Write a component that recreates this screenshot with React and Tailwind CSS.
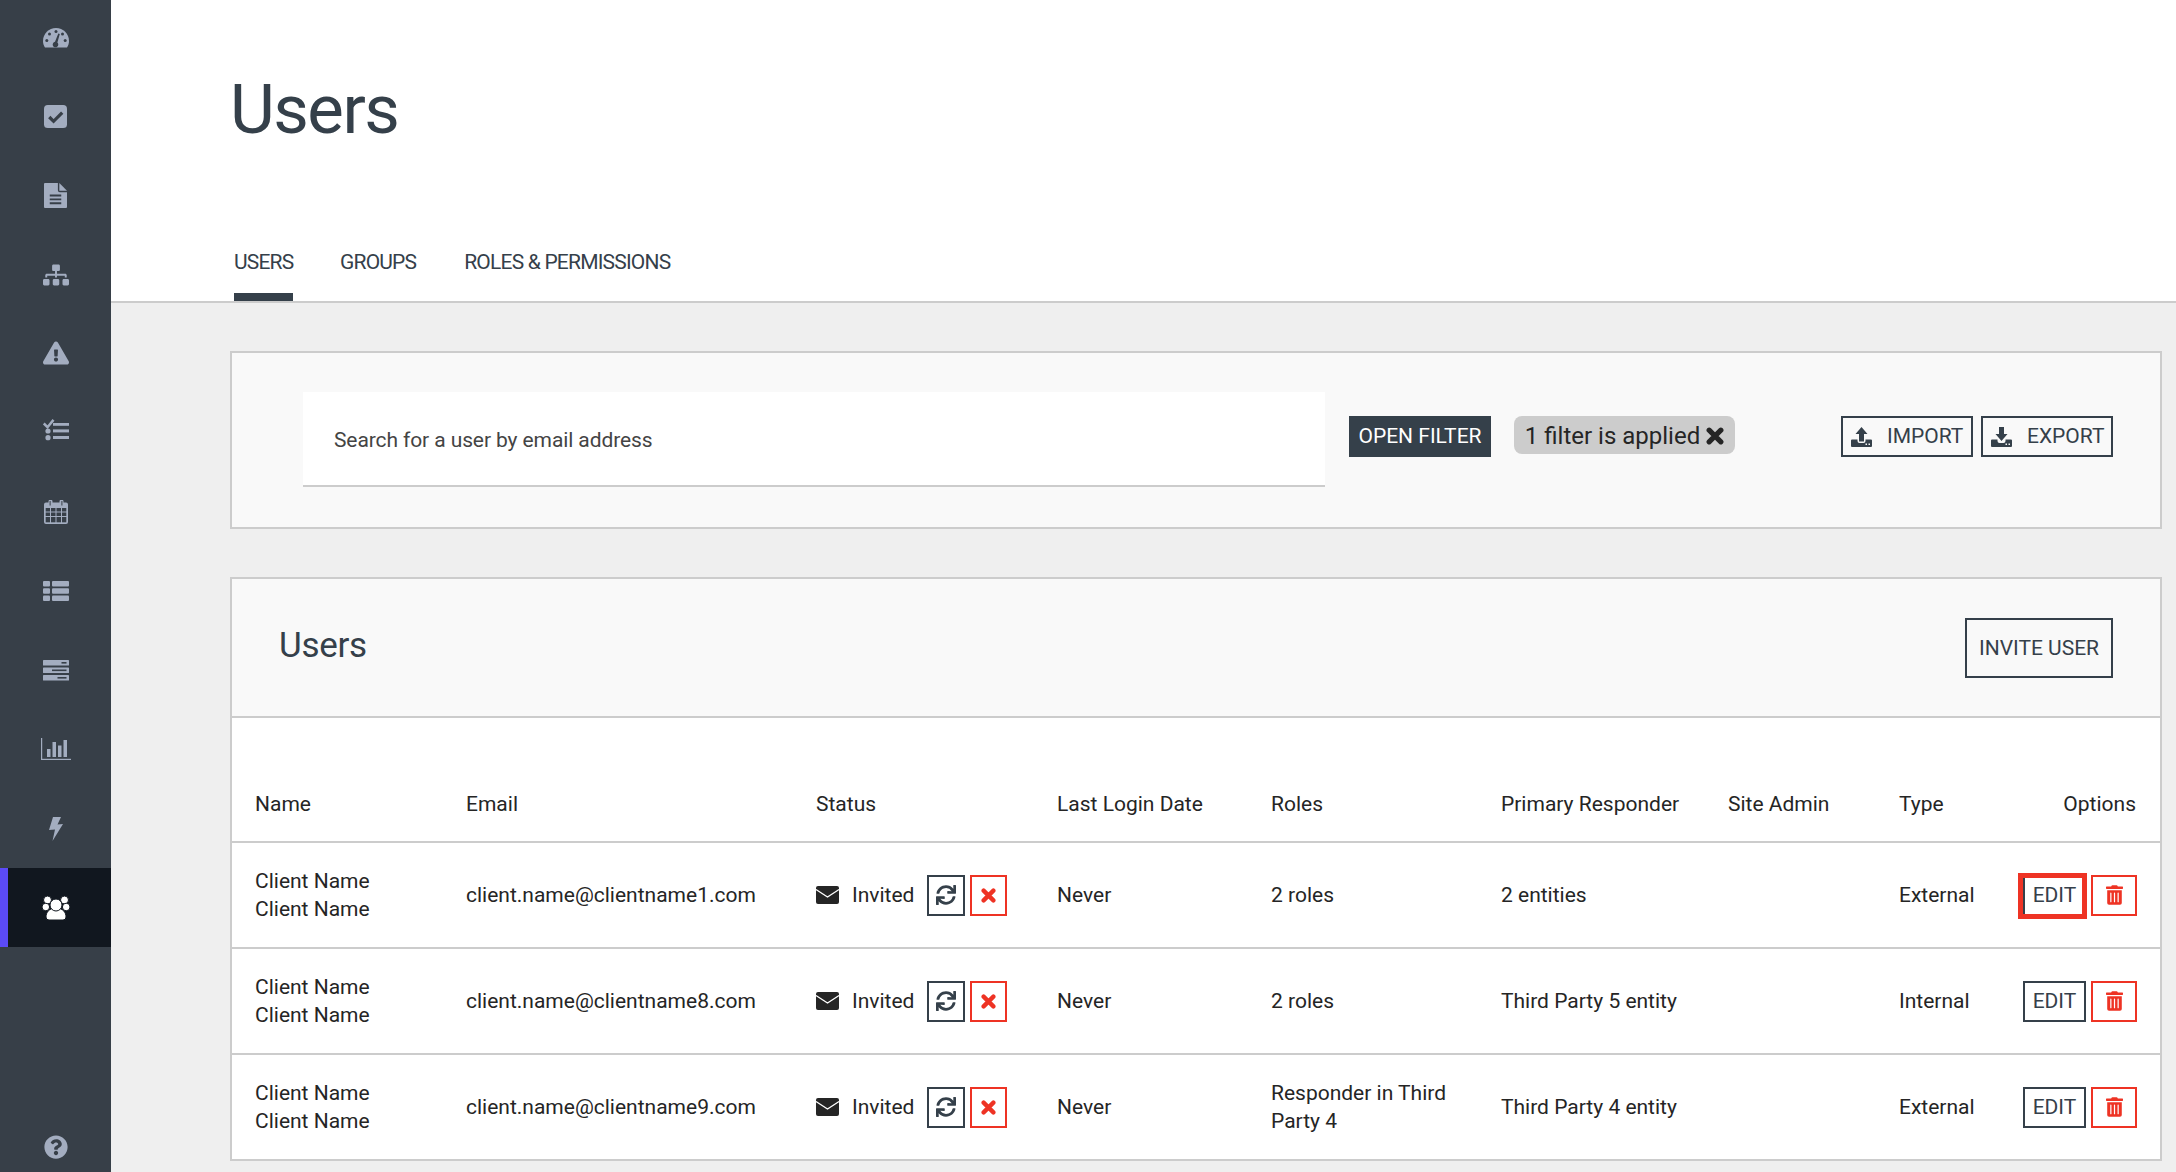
import React from "react";
import { FaSitemap, FaExclamationTriangle, FaQuestionCircle, FaSync, FaTrashAlt } from "react-icons/fa";

const Gauge = () => (
  <svg viewBox="0 0 26 22" className="w-[26px] h-[22px]">
    <path fill="currentColor" d="M2 20.5C.7 18.6 0 16.4 0 14 0 6.8 5.8 1 13 1s13 5.8 13 13c0 2.4-.7 4.6-2 6.500z" />
    <g fill="#373f48">
      <circle cx="13" cy="4.500" r="1.500" /><circle cx="6.500" cy="7" r="1.500" /><circle cx="19.500" cy="7" r="1.500" />
      <circle cx="3.800" cy="13.500" r="1.500" /><circle cx="22.200" cy="13.500" r="1.500" />
      <path d="M15.300 6.500l1.500.5-2.400 8.500a2.800 2.800 0 1 1-2.400-.7z" />
    </g>
  </svg>
);
const CheckBox = () => (
  <svg viewBox="0 0 24 24" className="w-[23px] h-[23px]">
    <rect width="24" height="24" rx="4" fill="currentColor" />
    <path d="M5.500 12.500l4.500 4.500 9-9" fill="none" stroke="#373f48" strokeWidth="3.400" />
  </svg>
);
const FileDoc = () => (
  <svg viewBox="0 0 24 26" className="w-[23px] h-[25px]">
    <path fill="currentColor" d="M1 0h13.500v7.500a2 2 0 0 0 2 2H24V25a1 1 0 0 1-1 1H1a1 1 0 0 1-1-1V1a1 1 0 0 1 1-1z" />
    <path fill="currentColor" d="M16 0l8 8h-8z" />
    <path stroke="#373f48" strokeWidth="2" d="M6 13h12M6 17h12M6 21h12" />
  </svg>
);
const Tasks = () => (
  <svg viewBox="0 0 26 22" className="w-[26px] h-[22px]">
    <path d="M.8 4.500l3.700 3.700L10.500.9" fill="none" stroke="currentColor" strokeWidth="2.500" />
    <g fill="currentColor">
      <rect x="10" y="4" width="16" height="2.800" />
      <circle cx="5" cy="12" r="2.600" /><rect x="10" y="10.400" width="16" height="3" />
      <circle cx="5" cy="18.700" r="2.600" /><rect x="10" y="17" width="16" height="3" />
    </g>
  </svg>
);
const Calendar = () => (
  <svg viewBox="0 0 24 24" className="w-[24px] h-[24px]">
    <path fill="currentColor" d="M2 2.500h2.500V1.500a2 2 0 0 1 4 0v1h7v-1a2 2 0 0 1 4 0v1H22a2 2 0 0 1 2 2V22a2 2 0 0 1-2 2H2a2 2 0 0 1-2-2V4.500a2 2 0 0 1 2-2z" />
    <g fill="#373f48">
      <rect x="5.600" y="1" width="1" height="4.500" /><rect x="17.400" y="1" width="1" height="4.500" />
      <rect x="1.700" y="8" width="4.300" height="3.500" /><rect x="7" y="8" width="4.500" height="3.500" /><rect x="12.500" y="8" width="4.500" height="3.500" /><rect x="18" y="8" width="4.300" height="3.500" />
      <rect x="1.700" y="12.500" width="4.300" height="3.500" /><rect x="7" y="12.500" width="4.500" height="3.500" /><rect x="12.500" y="12.500" width="4.500" height="3.500" /><rect x="18" y="12.500" width="4.300" height="3.500" />
      <rect x="1.700" y="17" width="4.300" height="5.300" /><rect x="7" y="17" width="4.500" height="5.300" /><rect x="12.500" y="17" width="4.500" height="5.300" /><rect x="18" y="17" width="4.300" height="5.300" />
    </g>
  </svg>
);
const ThList = () => (
  <svg viewBox="0 0 26 20" className="w-[26px] h-[20px]">
    <g fill="currentColor">
      <rect y="0" width="7" height="5.500" rx="1" /><rect x="9" y="0" width="17" height="5.500" rx="1" />
      <rect y="7.200" width="7" height="5.500" rx="1" /><rect x="9" y="7.200" width="17" height="5.500" rx="1" />
      <rect y="14.500" width="7" height="5.500" rx="1" /><rect x="9" y="14.500" width="17" height="5.500" rx="1" />
    </g>
  </svg>
);
const Server = () => (
  <svg viewBox="0 0 26 21" className="w-[26px] h-[21px]">
    <g fill="currentColor">
      <rect y="0" width="26" height="5.500" rx=".6" /><rect y="7.500" width="26" height="5.500" rx=".6" /><rect y="15" width="26" height="5.500" rx=".6" />
    </g>
    <g fill="#373f48">
      <rect x="18.500" y="2" width="5" height="1.600" /><rect x="9" y="9.500" width="14.500" height="1.600" /><rect x="14.500" y="17" width="9" height="1.600" />
    </g>
  </svg>
);
const Chart = () => (
  <svg viewBox="0 0 30 22" className="w-[30px] h-[22px]">
    <g fill="currentColor">
      <rect x="0" y="0" width="1.200" height="22" /><rect x="0" y="20.800" width="30" height="1.200" />
      <rect x="6" y="11" width="3.500" height="8" /><rect x="11.500" y="4" width="3.500" height="15" />
      <rect x="17" y="7.500" width="3.500" height="11.500" /><rect x="22.500" y="2" width="3.500" height="17" />
    </g>
  </svg>
);
const Bolt = () => (
  <svg viewBox="0 0 14 24" className="w-[14px] h-[24px]">
    <path fill="currentColor" d="M4 0h8L8.500 7.500l5.500-.5L3.500 24l2.500-11.500L0 13z" />
  </svg>
);
const Users = () => (
  <svg viewBox="0 0 28 24" className="w-[28px] h-[24px]">
    <g fill="currentColor" stroke="#11171f" strokeWidth="1">
      <circle cx="5.500" cy="4" r="4" /><circle cx="22.500" cy="4" r="4" />
      <circle cx="3.800" cy="11" r="3.800" /><circle cx="24.200" cy="11" r="3.800" />
      <path d="M7 24a3 3 0 0 1-3-3c0-4.500 3-9 10-9s10 4.500 10 9a3 3 0 0 1-3 3z" />
      <circle cx="14" cy="9" r="6" />
    </g>
  </svg>
);
const Mail = () => (
  <svg viewBox="0 0 23 18" className="w-[23px] h-[18px]">
    <rect width="23" height="18" rx="2" fill="#252525" />
    <path d="M0 3.500l11.500 7.500L23 3.500" fill="none" stroke="#fff" strokeWidth="1.300" />
  </svg>
);
const Tray = ({ down }) => (
  <svg viewBox="0 0 21 20" className="w-[21px] h-[20px]">
    <path fill="#35404a" d="M1 12.500h5.500v1.500a2 2 0 0 0 2 2h4a2 2 0 0 0 2-2v-1.500H20a1 1 0 0 1 1 1V19a1 1 0 0 1-1 1H1a1 1 0 0 1-1-1v-5.500a1 1 0 0 1 1-1z" />
    <rect x="14.500" y="16.500" width="1.500" height="1.500" fill="#f9f9f9" /><rect x="17.500" y="16.500" width="1.500" height="1.500" fill="#f9f9f9" />
    {down
      ? <path fill="#35404a" d="M8 0h5v7h3.500l-6 7-6-7H8z" />
      : <path fill="#35404a" d="M10.500 0l6 7H13v7.500H8V7H4.500z" />}
  </svg>
);
const ChunkyX = ({ className }) => (
  <svg viewBox="0 0 16 16" className={className}>
    <path d="M2.800 2.800l10.400 10.400M13.200 2.800L2.800 13.200" fill="none" stroke="currentColor" strokeWidth="4.600" strokeLinecap="round" />
  </svg>
);

const navIcons = [
  [<Gauge />, "pb-[2px]"], [<CheckBox />, "pb-[2px]"], [<FileDoc />, "pb-[2px]"], [<FaSitemap className="w-[26px] h-[26px]" />, "pb-[2px]"],
  [<FaExclamationTriangle className="w-[26px] h-[26px]" />, "pb-[4px]"], [<Tasks />, "pb-[8px]"], [<Calendar />, "pb-[2px]"], [<ThList />, "pb-[2px]"], [<Server />, "pb-[1px]"], [<Chart />, "pb-[2px]"], [<Bolt />, ""],
];

const rows = [
  ["client.name@clientname1.com", "2 roles", "2 entities", "External", true],
  ["client.name@clientname8.com", "2 roles", "Third Party 5 entity", "Internal", false],
  ["client.name@clientname9.com", "Responder in Third Party 4", "Third Party 4 entity", "External", false],
];

const cellBtn = "h-[41px] flex items-center justify-center border-2 bg-white";

function Row({ row }) {
  const [email, roles, responder, type, flagged] = row;
  return (
    <tr className="h-[106px] border-b-2 border-[#cccccc]">
      <td className="pl-[23px]"><div>Client Name</div><div>Client Name</div></td>
      <td className="pl-[23px]">{email}</td>
      <td className="pl-[23px]">
        <div className="flex items-center">
          <Mail />
          <span className="ml-[13px] w-[75px]">Invited</span>
          <div className="flex gap-[5px]">
            <button className={`${cellBtn} w-[38px] border-[#35404a] text-[#35404a]`}><FaSync className="w-[20px] h-[20px]" /></button>
            <button className={`${cellBtn} w-[37px] border-[#ee3324] text-[#ee3324]`}><ChunkyX className="w-[15px] h-[15px]" /></button>
          </div>
        </div>
      </td>
      <td className="pl-[23px]">Never</td>
      <td className="pl-[23px]">{roles}</td>
      <td className="pl-[23px]">{responder}</td>
      <td className="pl-[23px]"></td>
      <td className="pl-[23px]">{type}</td>
      <td className="pr-[23px]">
        <div className="flex justify-end gap-[5px]">
          <div className="relative">
            <button className={`${cellBtn} w-[63px] border-[#35404a] text-[#35404a]`}>EDIT</button>
            {flagged && <div className="absolute left-[-5px] right-[-1px] top-[-2px] bottom-[-3px] border-[5px] border-[#ee3324]" />}
          </div>
          <button className={`${cellBtn} w-[46px] border-[#ee3324] text-[#ee3324]`}><FaTrashAlt className="w-[17px] h-[20px]" /></button>
        </div>
      </td>
    </tr>
  );
}

export default function App() {
  return (
    <div className="flex h-[1172px] overflow-hidden font-['Roboto',sans-serif] text-[21px] leading-[28.500px] text-[#252525]">
      <aside className="w-[111px] shrink-0 bg-[#373f48] flex flex-col justify-between text-[#a3adc0]">
        <nav className="mt-[-1px]">
          {navIcons.map(([icon, shift], i) => (
            <div key={i} className={`h-[79px] flex items-center justify-center ${shift}`}>{icon}</div>
          ))}
          <div className="h-[79px] flex items-center justify-center bg-[#11171f] border-l-[8px] border-[#5b4af7] pr-[8px] text-white"><Users /></div>
        </nav>
        <div className="flex justify-center pb-[13px]"><FaQuestionCircle className="w-[24px] h-[24px]" /></div>
      </aside>

      <main className="flex-1 min-w-0 flex flex-col bg-[#efefef]">
        <header className="h-[303px] shrink-0 bg-white border-b-2 border-[#cccccc] flex flex-col justify-between pl-[119px]">
          <h1 className="mt-[66px] text-[69px] leading-[88px] text-[#35404a] tracking-[-1.500px]">Users</h1>
          <div className="flex ml-[4px] text-[#35404a] tracking-[-0.800px]">
            <div className="h-[53px] w-[59px] border-b-[8px] border-[#35404a] mr-[47px] whitespace-nowrap">USERS</div>
            <div className="mr-[48px]">GROUPS</div>
            <div>ROLES &amp; PERMISSIONS</div>
          </div>
        </header>

        <div className="flex-1 min-h-0 pl-[119px] pr-[14px] pt-[48px]">
          <section className="h-[178px] border-2 border-[#cccccc] bg-[#f9f9f9] flex items-start pl-[71px] pr-[47px] pt-[39px]">
            <div className="w-[1022px] h-[95px] bg-white border-b-2 border-[#cccccc] flex items-center pl-[31px] pt-[3px] text-[#444444] tracking-[-0.100px]">Search for a user by email address</div>
            <button className="ml-[24px] mt-[24px] w-[142px] h-[41px] bg-[#35404a] text-white">OPEN FILTER</button>
            <div className="ml-[23px] mt-[24px] w-[221px] h-[38px] rounded-[8px] bg-[#cccccc] flex items-center justify-center gap-[6px] pt-[2px] text-[24px] text-[#252525]">1 filter is applied <ChunkyX className="w-[18px] h-[18px]" /></div>
            <div className="ml-auto mt-[24px] flex gap-[8px] text-[#35404a]">
              <button className="w-[132px] h-[41px] border-2 border-[#35404a] flex items-center pl-[8px] gap-[15px]"><Tray />IMPORT</button>
              <button className="w-[132px] h-[41px] border-2 border-[#35404a] flex items-center pl-[8px] gap-[15px]"><Tray down />EXPORT</button>
            </div>
          </section>

          <section className="mt-[48px] border-2 border-b-0 border-[#cccccc] bg-white">
            <div className="h-[139px] bg-[#f9f9f9] border-b-2 border-[#cccccc] flex items-center justify-between pl-[47px] pr-[47px]">
              <h2 className="text-[35px] leading-[44px] text-[#35404a] tracking-[-0.300px] mb-[4px]">Users</h2>
              <button className="w-[148px] h-[60px] border-2 border-[#35404a] pt-[1px] text-[#35404a]">INVITE USER</button>
            </div>
            <table className="w-full table-fixed border-collapse">
              <colgroup>
                <col className="w-[211px]" /><col className="w-[350px]" /><col className="w-[241px]" /><col className="w-[214px]" />
                <col className="w-[230px]" /><col className="w-[227px]" /><col className="w-[171px]" /><col className="w-[110px]" /><col />
              </colgroup>
              <thead>
                <tr className="h-[124px] border-b-2 border-[#cccccc] text-left align-bottom">
                  {["Name", "Email", "Status", "Last Login Date", "Roles", "Primary Responder", "Site Admin", "Type"].map((h) => (
                    <th key={h} className="pl-[23px] pb-[23px] font-normal whitespace-nowrap">{h}</th>
                  ))}
                  <th className="pr-[24px] pb-[23px] font-normal text-right">Options</th>
                </tr>
              </thead>
              <tbody>
                {rows.map((r) => <Row key={r[0]} row={r} />)}
              </tbody>
            </table>
          </section>
        </div>
      </main>
    </div>
  );
}
